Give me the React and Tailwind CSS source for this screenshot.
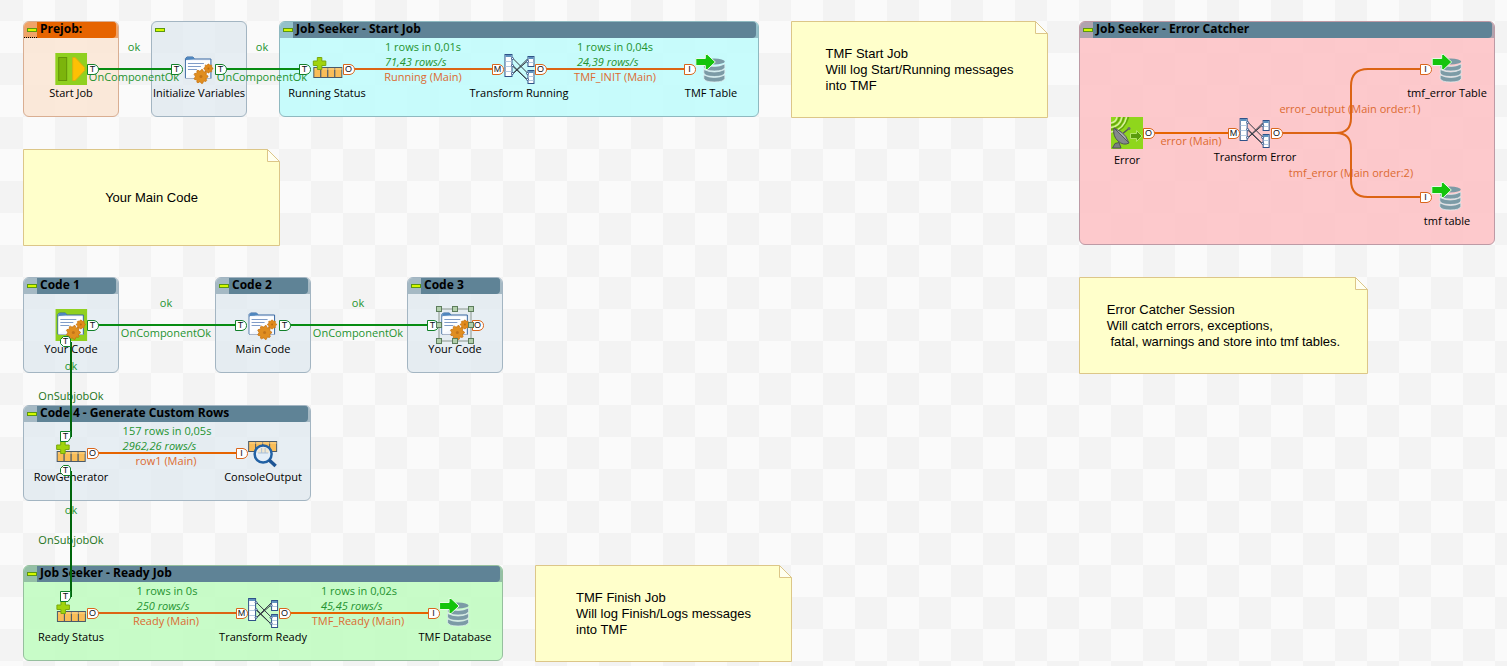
import React from "react";

const SUBJOBS = [
  { title: "Prejob:", x: 23, y: 21, w: 96, h: 96, body: "bg-[#fae5d3]/85 border-[#d9ae92]", head: "bg-[#e66400]", strip: "bg-[#f0a368]", focus: true },
  { title: "", x: 151, y: 21, w: 96, h: 96, body: "bg-[#e0eaf0]/75 border-[#a3b5c2]", head: "", strip: "" },
  { title: "Job Seeker - Start Job", x: 279, y: 21, w: 480, h: 96, body: "bg-[#c2fcfc]/90 border-[#8fb9c0]", head: "bg-[#5f8396]", strip: "bg-[#94c0ca]" },
  { title: "Job Seeker - Error Catcher", x: 1079, y: 21, w: 416, h: 224, body: "bg-[#fdc3c6]/90 border-[#bd9aa5]", head: "bg-[#5f8396]", strip: "bg-[#b0a3ae]" },
  { title: "Code 1", x: 23, y: 277, w: 96, h: 96, body: "bg-[#e0eaf0]/75 border-[#a3b5c2]", head: "bg-[#5f8396]", strip: "bg-[#a5b9c4]" },
  { title: "Code 2", x: 215, y: 277, w: 96, h: 96, body: "bg-[#e0eaf0]/75 border-[#a3b5c2]", head: "bg-[#5f8396]", strip: "bg-[#a5b9c4]" },
  { title: "Code 3", x: 407, y: 277, w: 96, h: 96, body: "bg-[#e0eaf0]/75 border-[#a3b5c2]", head: "bg-[#5f8396]", strip: "bg-[#a5b9c4]" },
  { title: "Code 4 - Generate Custom Rows", x: 23, y: 405, w: 288, h: 96, body: "bg-[#e0eaf0]/75 border-[#a3b5c2]", head: "bg-[#5f8396]", strip: "bg-[#a5b9c4]" },
  { title: "Job Seeker - Ready Job", x: 23, y: 565, w: 480, h: 96, body: "bg-[#c2fcc2]/90 border-[#96bf9e]", head: "bg-[#5f8396]", strip: "bg-[#94bfa6]" },
];

const NOTES = [
  { x: 791, y: 21, w: 257, h: 97, text: "TMF Start Job\nWill log Start/Running messages\ninto TMF" },
  { x: 23, y: 149, w: 257, h: 97, text: "Your Main Code" },
  { x: 1079, y: 277, w: 289, h: 97, text: "Error Catcher Session\nWill catch errors, exceptions,\n fatal, warnings and store into tmf tables." },
  { x: 535, y: 565, w: 257, h: 97, text: "TMF Finish Job\nWill log Finish/Logs messages\ninto TMF" },
];

const NODES = [
  { name: "Start Job", icon: "prejob", x: 71, y: 69 },
  { name: "Initialize Variables", icon: "code", x: 199, y: 69 },
  { name: "Running Status", icon: "rows", x: 327, y: 69 },
  { name: "Transform Running", icon: "map", x: 519, y: 69 },
  { name: "TMF Table", icon: "db", x: 711, y: 69 },
  { name: "Error", icon: "catcher", x: 1127, y: 133, drop: 3 },
  { name: "Transform Error", icon: "map", x: 1255, y: 133 },
  { name: "tmf_error Table", icon: "db", x: 1447, y: 69 },
  { name: "tmf table", icon: "db", x: 1447, y: 197 },
  { name: "Your Code", icon: "code", x: 71, y: 325, start: true },
  { name: "Main Code", icon: "code", x: 263, y: 325 },
  { name: "Your Code", icon: "code", x: 455, y: 325 },
  { name: "RowGenerator", icon: "rows", x: 71, y: 453 },
  { name: "ConsoleOutput", icon: "console", x: 263, y: 453 },
  { name: "Ready Status", icon: "rows", x: 71, y: 613 },
  { name: "Transform Ready", icon: "map", x: 263, y: 613 },
  { name: "TMF Database", icon: "db", x: 455, y: 613 },
];

const LINKS = [
  { d: "M98 69H172", color: "#078c12" },
  { d: "M226 69H300", color: "#078c12" },
  { d: "M354 69H493", color: "#dc6414" },
  { d: "M546 69H685", color: "#dc6414" },
  { d: "M98 325H236", color: "#078c12" },
  { d: "M290 325H428", color: "#078c12" },
  { d: "M98 453H237", color: "#e66400" },
  { d: "M98 613H237", color: "#dc6414" },
  { d: "M290 613H429", color: "#e66400" },
  { d: "M1154 133H1229", color: "#e66400" },
  { d: "M1282 133H1336Q1351 133 1351 118V86Q1351 69 1368 69H1421", color: "#dc6414" },
  { d: "M1336 133Q1351 133 1351 148V180Q1351 197 1368 197H1421", color: "#dc6414" },
  { d: "M71 342V437", color: "#00660c" },
  { d: "M71 471V597", color: "#00660c" },
];

const LABELS = [
  { text: "ok", x: 134, y: 47, tone: "ok" },
  { text: "OnComponentOk", x: 134, y: 77, tone: "ok" },
  { text: "ok", x: 262, y: 47, tone: "ok" },
  { text: "OnComponentOk", x: 262, y: 77, tone: "ok" },
  { text: "Running (Main)", x: 423, y: 77, tone: "main" },
  { text: "TMF_INIT (Main)", x: 615, y: 77, tone: "main" },
  { text: "error (Main)", x: 1191, y: 141, tone: "main" },
  { text: "error_output (Main order:1)", x: 1350, y: 109, tone: "main" },
  { text: "tmf_error (Main order:2)", x: 1351, y: 173, tone: "main" },
  { text: "ok", x: 166, y: 303, tone: "ok" },
  { text: "OnComponentOk", x: 166, y: 333, tone: "ok" },
  { text: "ok", x: 358, y: 303, tone: "ok" },
  { text: "OnComponentOk", x: 358, y: 333, tone: "ok" },
  { text: "ok", x: 71, y: 366, tone: "ok" },
  { text: "OnSubjobOk", x: 71, y: 396, tone: "subjob" },
  { text: "row1 (Main)", x: 166, y: 461, tone: "main" },
  { text: "ok", x: 71, y: 510, tone: "ok" },
  { text: "OnSubjobOk", x: 71, y: 540, tone: "subjob" },
  { text: "Ready (Main)", x: 166, y: 621, tone: "main" },
  { text: "TMF_Ready (Main)", x: 358, y: 621, tone: "main" },
];

const TONES = { ok: "text-[#249330]", subjob: "text-[#1c7420]", main: "text-[#dc6a30]" };

const STATS = [
  { rows: "1 rows in 0,01s", rate: "71,43 rows/s", x: 423, y: 54 },
  { rows: "1 rows in 0,04s", rate: "24,39 rows/s", x: 615, y: 54 },
  { rows: "157 rows in 0,05s", rate: "2962,26 rows/s", x: 167, y: 438 },
  { rows: "1 rows in 0s", rate: "250 rows/s", x: 167, y: 598 },
  { rows: "1 rows in 0,02s", rate: "45,45 rows/s", x: 359, y: 598 },
];

const G = "text-[#12802a]";
const O = "text-[#d9661c]";
const PORTS = [
  { t: "T", x: 87, y: 69, c: G },
  { t: "T", x: 171, y: 69, c: G },
  { t: "T", x: 215, y: 69, c: G },
  { t: "T", x: 299, y: 69, c: G },
  { t: "O", x: 343, y: 69, c: O },
  { t: "M", x: 492, y: 69, c: O },
  { t: "O", x: 535, y: 69, c: O },
  { t: "I", x: 684, y: 69, c: O },
  { t: "O", x: 1143, y: 133, c: O },
  { t: "M", x: 1228, y: 133, c: O },
  { t: "O", x: 1271, y: 133, c: O },
  { t: "I", x: 1420, y: 69, c: O },
  { t: "I", x: 1420, y: 197, c: O },
  { t: "T", x: 87, y: 325, c: G },
  { t: "T", x: 235, y: 325, c: G },
  { t: "T", x: 279, y: 325, c: G },
  { t: "T", x: 427, y: 325, c: G },
  { t: "O", x: 472, y: 325, c: O },
  { t: "O", x: 87, y: 453, c: O },
  { t: "I", x: 236, y: 453, c: O },
  { t: "O", x: 87, y: 613, c: O },
  { t: "M", x: 236, y: 613, c: O },
  { t: "O", x: 279, y: 613, c: O },
  { t: "I", x: 428, y: 613, c: O },
  { t: "T", x: 60, y: 341, c: G, shape: "out" },
  { t: "T", x: 60, y: 436, c: G, shape: "in" },
  { t: "T", x: 60, y: 470, c: G, shape: "out" },
  { t: "T", x: 60, y: 596, c: G, shape: "in" },
];

const PORT_SHAPES = {
  side: "M.5 .5H7Q11.5 1.5 11.5 5.5T7 10.5H.5Z",
  out: "M3.5 .5H8.5L10.5 3V10.5H3.5L.5 7.5V3.5Z",
  in: "M.5 .5H10.5V7L8 10.5H.5Z",
};

function gear(cx, cy, r, teeth) {
  const pts = [];
  for (let i = 0; i < teeth * 4; i++) {
    const a = ((i - 0.5) / (teeth * 4)) * Math.PI * 2;
    const rad = i % 4 < 2 ? r : r * 0.8;
    pts.push(`${(cx + Math.cos(a) * rad).toFixed(2)},${(cy + Math.sin(a) * rad).toFixed(2)}`);
  }
  return pts.join(" ");
}

function Cells({ x, y }) {
  return (
    <g stroke="#4a5a6a" strokeWidth="1">
      {[0, 7, 14, 21].map((dx) => (
        <rect key={dx} x={x + dx} y={y} width="7" height="10" fill="#f9bd58" />
      ))}
      <path d={`M${x + 1} ${y + 1.5}h27`} stroke="#fcd48c" />
    </g>
  );
}

const ICONS = {
  prejob: (
    <>
      <rect width="32" height="32" fill="#90d020" />
      <rect x="3.5" y="4.5" width="8" height="23" fill="#7cb40c" stroke="#649408" />
      <path d="M17.500 4.500V27.500H20L29.500 17.500V14.500L20 4.500Z" fill="#fdc004" stroke="#d9b010" />
    </>
  ),
  code: (
    <>
      <path d="M2.500 25V5.500L4 4H10L11.500 6H28V25.500H3Z" fill="#f4f7fd" stroke="#3767a0" />
      <path d="M3 7V5L4.500 4H10L12 6.500Z" fill="#4f86be" />
      <path d="M3 8L27 8V12L3 25Z" fill="#fff" opacity=".8" />
      <path d="M5 10.500H21M5 13.500H18M5 16.500H14" stroke="#7f9cc8" />
      <path d="M3 25.500H28" stroke="#a9b5c9" />
      <polygon points={gear(25.5, 15.5, 4.5, 8)} fill="#e08a1c" stroke="#c87410" strokeWidth=".7" />
      <circle cx="25.500" cy="15.500" r="1" fill="#bb6d14" />
      <polygon points={gear(18, 23.5, 7, 9)} fill="#e08e20" stroke="#c87410" strokeWidth=".8" />
      <circle cx="18" cy="23.500" r="1.500" fill="#c27418" />
    </>
  ),
  rows: (
    <>
      <Cells x={2.5} y={14.5} />
      <path d="M6 4.500H10.500V8H14.500V12.500H10.500V16.500H6V12.500H2V8H6Z" fill="#a0d40c" stroke="#7aa80c" />
    </>
  ),
  map: (
    <>
      <path d="M9 5L24 20M9 12L24 27M9 21L24 6M9 13L24 27M9 21L24 8" stroke="#343b45" fill="none" />
      <g fill="#fff" stroke="#2f5288">
        <rect x="1.500" y="1.500" width="7" height="22" />
        <rect x="24.500" y="3.500" width="6" height="10" />
        <rect x="24.500" y="17.500" width="6" height="13" />
      </g>
      <path d="M2 3H8M25 5H30M25 19H30" stroke="#5f93c0" strokeWidth="2" />
      <path d="M2 8.500H8M2 13.500H8M2 18.500H8M25 9.500H30M25 23.500H30M25 27.500H30" stroke="#b4cbe2" />
      <g fill="#fff" stroke="#3a5c90">
        <circle cx="9" cy="5.500" r="1" />
        <circle cx="9" cy="12.500" r="1" />
        <circle cx="9" cy="20.500" r="1" />
        <circle cx="24" cy="8.500" r="1" />
        <circle cx="24" cy="20.500" r="1" />
        <circle cx="24" cy="26.500" r="1" />
      </g>
    </>
  ),
  db: (
    <>
      <ellipse cx="19.500" cy="8.500" rx="10.500" ry="3" fill="#7c9ba6" />
      {[11, 16.5, 22].map((y) => (
        <path key={y} d={`M9 ${y}Q19.500 ${y + 5} 30 ${y}V${y + 3.5}Q29 ${y + 7} 19.500 ${y + 7}T9 ${y + 3.5}Z`} fill="#7c9ba6" stroke="#e4f0f2" strokeWidth=".7" />
      ))}
      <path d="M1 5.500H10.500V1.500H12.500L20.500 9L12.500 16.500H10.500V12.500H1Z" fill="#14c40c" stroke="#e8fbe8" strokeWidth="1" />
    </>
  ),
  catcher: (
    <>
      <rect width="32" height="32" fill="#8fd61c" />
      <g fill="none" stroke="#d8f0a0" strokeWidth="1.500">
        <path d="M0 6Q5 5 6 0M0 10.500Q9 9 11 0M0 15Q13 13 15.500 0" />
      </g>
      <g fill="none" stroke="#64a50c" strokeWidth="1.500">
        <path d="M0 8Q7 7 8.500 0M0 12.500Q11 11 13 0M2 16Q14 13 17.500 0" />
      </g>
      <path d="M19.500 16.500H25.500V13.500L31 19L25.500 24.500V21.500H19.500Z" fill="#5a9c0c" stroke="#b4e468" />
      <path d="M10 18L18.500 11" stroke="#53575a" strokeWidth="1.500" />
      <circle cx="18" cy="11.500" r="1.500" fill="#6b6f72" />
      <path d="M3 11Q1.500 19 7 24T18 26Z" fill="#85898d" stroke="#4f5356" />
      <path d="M3 11L18 26Q15 18 11 15.500T3 11Z" fill="#a6a9ac" stroke="#55595c" />
      <path d="M1.500 31L4 26.500L8 25.500L10 31Z" fill="#7a7e82" stroke="#505457" />
    </>
  ),
  console: (
    <>
      <Cells x={1.5} y={4.5} />
      <circle cx="16" cy="17" r="8.500" fill="#e4eef8" stroke="#2362a4" strokeWidth="2.500" />
      <path d="M10 16Q10 11 16 10.500T22 16Z" fill="#f5e2bd" opacity=".7" />
      <path d="M11 16H21M14.500 11V16M18 11V16" stroke="#a9bfd8" />
      <path d="M22 23L28.500 29" stroke="#1e5594" strokeWidth="3.500" />
    </>
  ),
};

function Subjob({ title, x, y, w, h, body, head, strip, focus }) {
  return (
    <section
      aria-label={title || "Subjob"}
      className={`absolute overflow-hidden rounded-md border ${body}`}
      style={{ left: x, top: y, width: w, height: h }}
    >
      <header className={`-mx-px -mt-px flex h-[17px] items-stretch pr-[3px] ${strip}`}>
        <button
          type="button"
          aria-label="Collapse"
          className={`flex w-[14px] shrink-0 items-center justify-end ${focus ? "border-y border-l border-dotted border-black" : ""}`}
        >
          <svg width="10" height="4" viewBox="0 0 10 4">
            <rect x=".5" y=".5" width="9" height="3" fill="#d4f800" stroke="#5c9810" />
          </svg>
        </button>
        <h2 className={`flex-1 truncate rounded-r-sm pl-[3px] text-[12px] leading-4 font-bold text-black ${head}`}>{title}</h2>
      </header>
    </section>
  );
}

function Note({ x, y, w, h, text }) {
  return (
    <aside className="absolute flex items-center justify-center" style={{ left: x, top: y, width: w, height: h }}>
      <svg className="absolute inset-0" width={w} height={h}>
        <path d={`M.5 .5H${w - 12.5}L${w - 0.5} 12.5V${h - 0.5}H.5Z`} fill="#ffffcb" stroke="#dcc688" />
        <path d={`M${w - 12.5} .5V12.5H${w - 0.5}Z`} fill="#fffff0" stroke="#dcc688" />
      </svg>
      <p className="relative whitespace-pre font-['Liberation_Sans',Arial,sans-serif] text-[13px] leading-4 text-black">{text}</p>
    </aside>
  );
}

function Node({ name, icon, x, y, start, drop = 0 }) {
  return (
    <figure
      className="absolute flex -translate-x-1/2 flex-col items-center"
      style={{ left: x, top: y - 16, rowGap: drop }}
    >
      <svg width="32" height="32" viewBox="0 0 32 32">
        {start && <rect width="32" height="32" fill="#90d020" />}
        {ICONS[icon]}
      </svg>
      <figcaption className="text-[11px] leading-4 whitespace-nowrap text-black">{name}</figcaption>
    </figure>
  );
}

function Port({ t, x, y, c, shape = "side" }) {
  return (
    <span className={`absolute flex h-[11px] w-3 items-center ${c}`} style={{ left: x, top: y - 5 }}>
      <svg className="absolute inset-0" width="12" height="11" viewBox="0 0 12 11">
        <path d={PORT_SHAPES[shape]} fill="#fff" stroke="currentColor" />
      </svg>
      <span className="relative w-[11px] text-center font-['Liberation_Sans',Arial,sans-serif] text-[9px] leading-[11px] text-[#101018]">{t}</span>
    </span>
  );
}

function Selection({ x, y }) {
  const spots = [[0, 0], [16, 0], [32, 0], [0, 16], [32, 16], [0, 32], [16, 32], [32, 32]];
  return (
    <svg className="absolute" style={{ left: x - 19, top: y - 19 }} width="38" height="38">
      <rect x="3" y="3" width="32" height="32" fill="none" stroke="#8a968e" />
      {spots.map(([a, b]) => (
        <rect key={`${a}-${b}`} x={a + 0.5} y={b + 0.5} width="5" height="5" fill="#b2cfac" stroke="#5d7d5c" />
      ))}
    </svg>
  );
}

export default function App() {
  return (
    <main className="relative min-h-screen w-full overflow-hidden bg-[conic-gradient(#fafafa_25%,#f3f3f3_0_50%,#fafafa_0_75%,#f3f3f3_0)] bg-[length:64px_64px] bg-[position:23px_21px] font-['Open_Sans','Noto_Sans',sans-serif]">
      {SUBJOBS.map((s) => <Subjob key={`${s.x}-${s.y}`} {...s} />)}
      {NOTES.map((n) => <Note key={`${n.x}-${n.y}`} {...n} />)}
      {NODES.map((n) => <Node key={`${n.x}-${n.y}`} {...n} />)}
      {STATS.map((s) => (
        <div key={`${s.x}-${s.y}`} className="absolute -translate-x-1/2 -translate-y-1/2 text-[11px] leading-[15px] whitespace-nowrap text-[#249330]" style={{ left: s.x, top: s.y }}>
          <p>{s.rows}</p>
          <p className="italic">{s.rate}</p>
        </div>
      ))}
      {LABELS.map((l) => (
        <span key={`${l.x}-${l.y}`} className={`absolute -translate-x-1/2 -translate-y-1/2 text-[11px] leading-4 whitespace-nowrap ${TONES[l.tone]}`} style={{ left: l.x, top: l.y }}>
          {l.text}
        </span>
      ))}
      <svg className="pointer-events-none absolute inset-0 h-full w-full" fill="none" strokeWidth="2">
        {LINKS.map((l) => <path key={l.d} d={l.d} stroke={l.color} />)}
      </svg>
      {PORTS.map((p) => <Port key={`${p.x}-${p.y}`} {...p} />)}
      <Selection x={455} y={325} />
    </main>
  );
}
